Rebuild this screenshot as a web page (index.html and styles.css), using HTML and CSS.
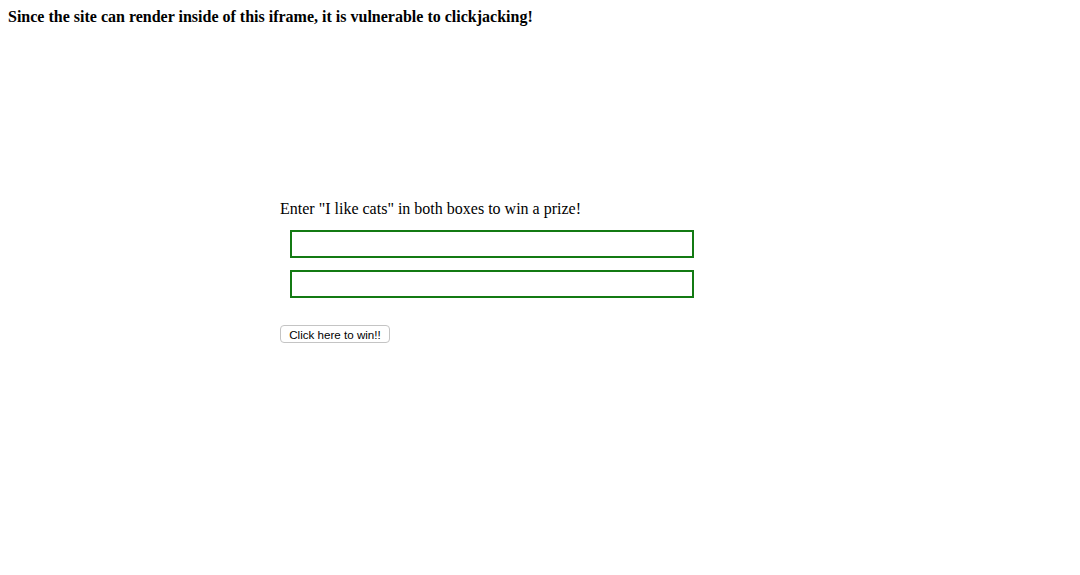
FILE: index.html
```html
<!DOCTYPE html>
<html>
<head>
<meta charset="utf-8">
<link rel="stylesheet" href="styles.css">
</head>
<body>
<div class="warning">Since the site can render inside of this iframe, it is vulnerable to clickjacking!</div>
<div class="frame">
  <div class="prompt">Enter "I like cats" in both boxes to win a prize!</div>
  <div class="fields">
    <input class="box" type="text">
    <input class="box" type="text">
  </div>
  <button class="win">Click here to win!!</button>
</div>
</body>
</html>
```
FILE: styles.css
```css
html, body {
  background: #ffffff;
}
body {
  margin: 8px;
  font-family: "Liberation Serif", "Times New Roman", serif;
  font-size: 16px;
  color: #000;
}
.warning {
  font-weight: bold;
  line-height: 18px;
}
.frame {
  margin-left: 272px;
  margin-top: 174px;
  display: flex;
  flex-direction: column;
  align-items: flex-start;
}
.prompt {
  line-height: 18px;
}
.fields {
  display: flex;
  flex-direction: column;
  gap: 12px;
  margin-top: 12px;
  margin-left: 10px;
}
.box {
  box-sizing: border-box;
  width: 404px;
  height: 28px;
  border: 2px solid #137a13;
  margin: 0;
  padding: 0 4px;
  background: #fff;
  outline: none;
}
.win {
  margin-top: 27px;
  box-sizing: border-box;
  width: 110px;
  height: 18px;
  padding: 0;
  font-family: "Liberation Sans", Arial, sans-serif;
  font-size: 11.6px;
  color: #000;
  background: #fff;
  border: 1px solid #c4c4c4;
  border-radius: 4px;
}
```
